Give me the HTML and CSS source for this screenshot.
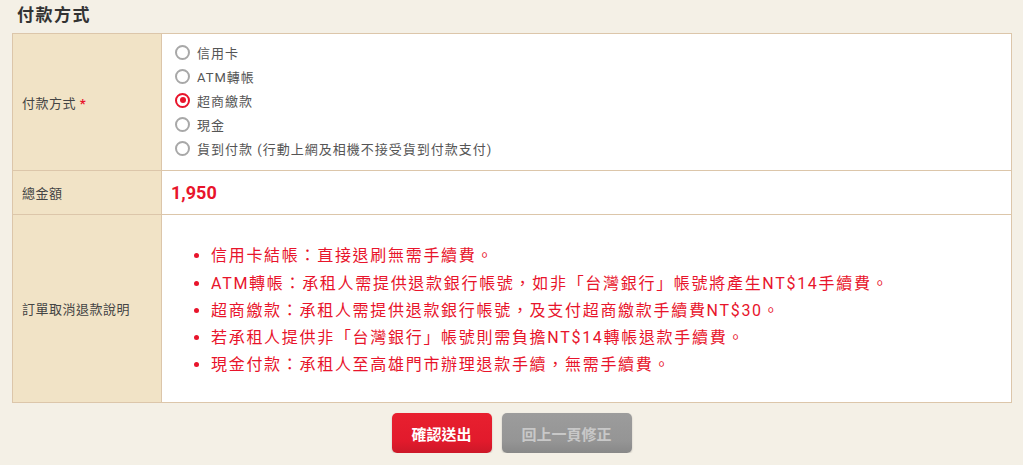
FILE: index.html
```html
<!DOCTYPE html>
<html lang="zh-TW">
<head>
<meta charset="utf-8">
<link rel="stylesheet" href="styles.css">
</head>
<body>
<h2 class="title">付款方式</h2>
<table class="form">
  <tr class="row-pay">
    <th>付款方式 <span class="req">*</span></th>
    <td>
      <ul class="radios">
        <li><span class="radio"></span>信用卡</li>
        <li><span class="radio"></span>ATM轉帳</li>
        <li><span class="radio checked"></span>超商繳款</li>
        <li><span class="radio"></span>現金</li>
        <li><span class="radio"></span>貨到付款 (行動上網及相機不接受貨到付款支付)</li>
      </ul>
    </td>
  </tr>
  <tr class="row-total">
    <th>總金額</th>
    <td><span class="amount">1,950</span></td>
  </tr>
  <tr class="row-note">
    <th>訂單取消退款說明</th>
    <td>
      <ul class="notes">
        <li>信用卡結帳：直接退刷無需手續費。</li>
        <li>ATM轉帳：承租人需提供退款銀行帳號，如非「台灣銀行」帳號將產生NT$14手續費。</li>
        <li>超商繳款：承租人需提供退款銀行帳號，及支付超商繳款手續費NT$30。</li>
        <li>若承租人提供非「台灣銀行」帳號則需負擔NT$14轉帳退款手續費。</li>
        <li>現金付款：承租人至高雄門市辦理退款手續，無需手續費。</li>
      </ul>
    </td>
  </tr>
</table>
<div class="actions">
  <button class="btn btn-primary">確認送出</button>
  <button class="btn btn-gray">回上一頁修正</button>
</div>
</body>
</html>
```
FILE: styles.css
```css
html, body {
  margin: 0;
  padding: 0;
  background: #f4f0e6;
  font-family: Roboto, "Noto Sans CJK TC", sans-serif;
  color: #333;
}
.title {
  margin: 0;
  padding: 3px 0 0 17px;
  height: 33px;
  box-sizing: border-box;
  font-size: 17px;
  letter-spacing: 1.5px;
  line-height: 24px;
  font-weight: bold;
  color: #333;
}
.form {
  margin-left: 12px;
  width: 1000px;
  border-collapse: collapse;
  background: #fff;
}
.form th, .form td {
  border: 1px solid #dcc6aa;
}
.form th {
  width: 149px;
  box-sizing: border-box;
  background: #f1e3c6;
  text-align: left;
  font-weight: normal;
  font-size: 13px;
  letter-spacing: 0.5px;
  color: #444;
  padding: 0 9px;
  vertical-align: middle;
}
.req {
  color: #e8142b;
  font-weight: bold;
}
.form td {
  padding: 0 9px;
  vertical-align: middle;
}
.row-pay td {
  padding-top: 6px;
  padding-bottom: 10px;
}
.radios {
  list-style: none;
  margin: 0;
  padding: 0;
}
.radios li {
  display: flex;
  align-items: center;
  height: 24px;
  font-size: 13px;
  letter-spacing: 1px;
  color: #555;
}
.radio {
  width: 15px;
  height: 15px;
  box-sizing: border-box;
  border: 2px solid #a8a8a8;
  border-radius: 50%;
  margin: 0 7px 0 4px;
  display: flex;
  align-items: center;
  justify-content: center;
}
.radio.checked {
  border-color: #e8142b;
}
.radio.checked::after {
  content: "";
  width: 6px;
  height: 6px;
  border-radius: 50%;
  background: #e8142b;
}
.row-total td {
  height: 43px;
}
.amount {
  color: #e8142b;
  font-weight: bold;
  font-size: 18px;
}
.row-note td {
  height: 187px;
}
.notes {
  margin: 0;
  padding-left: 40px;
  color: #e8142b;
  font-size: 16px;
  letter-spacing: 1.7px;
  line-height: 27.2px;
  padding-top: 4px;
}
.actions {
  display: flex;
  justify-content: center;
  gap: 10px;
  margin-top: 10px;
}
.btn {
  height: 40px;
  border: none;
  border-radius: 5px;
  font-family: Roboto, "Noto Sans CJK TC", sans-serif;
  font-size: 15px;
  font-weight: bold;
  box-shadow: 0 1px 2px rgba(0,0,0,0.2);
}
.btn-primary {
  width: 100px;
  color: #fff;
  background: linear-gradient(#e8202f, #e21a2c 70%, #cc1828);
}
.btn-gray {
  width: 130px;
  color: #c8c8c8;
  background: linear-gradient(#9c9c9c, #959595 70%, #888);
}
```
